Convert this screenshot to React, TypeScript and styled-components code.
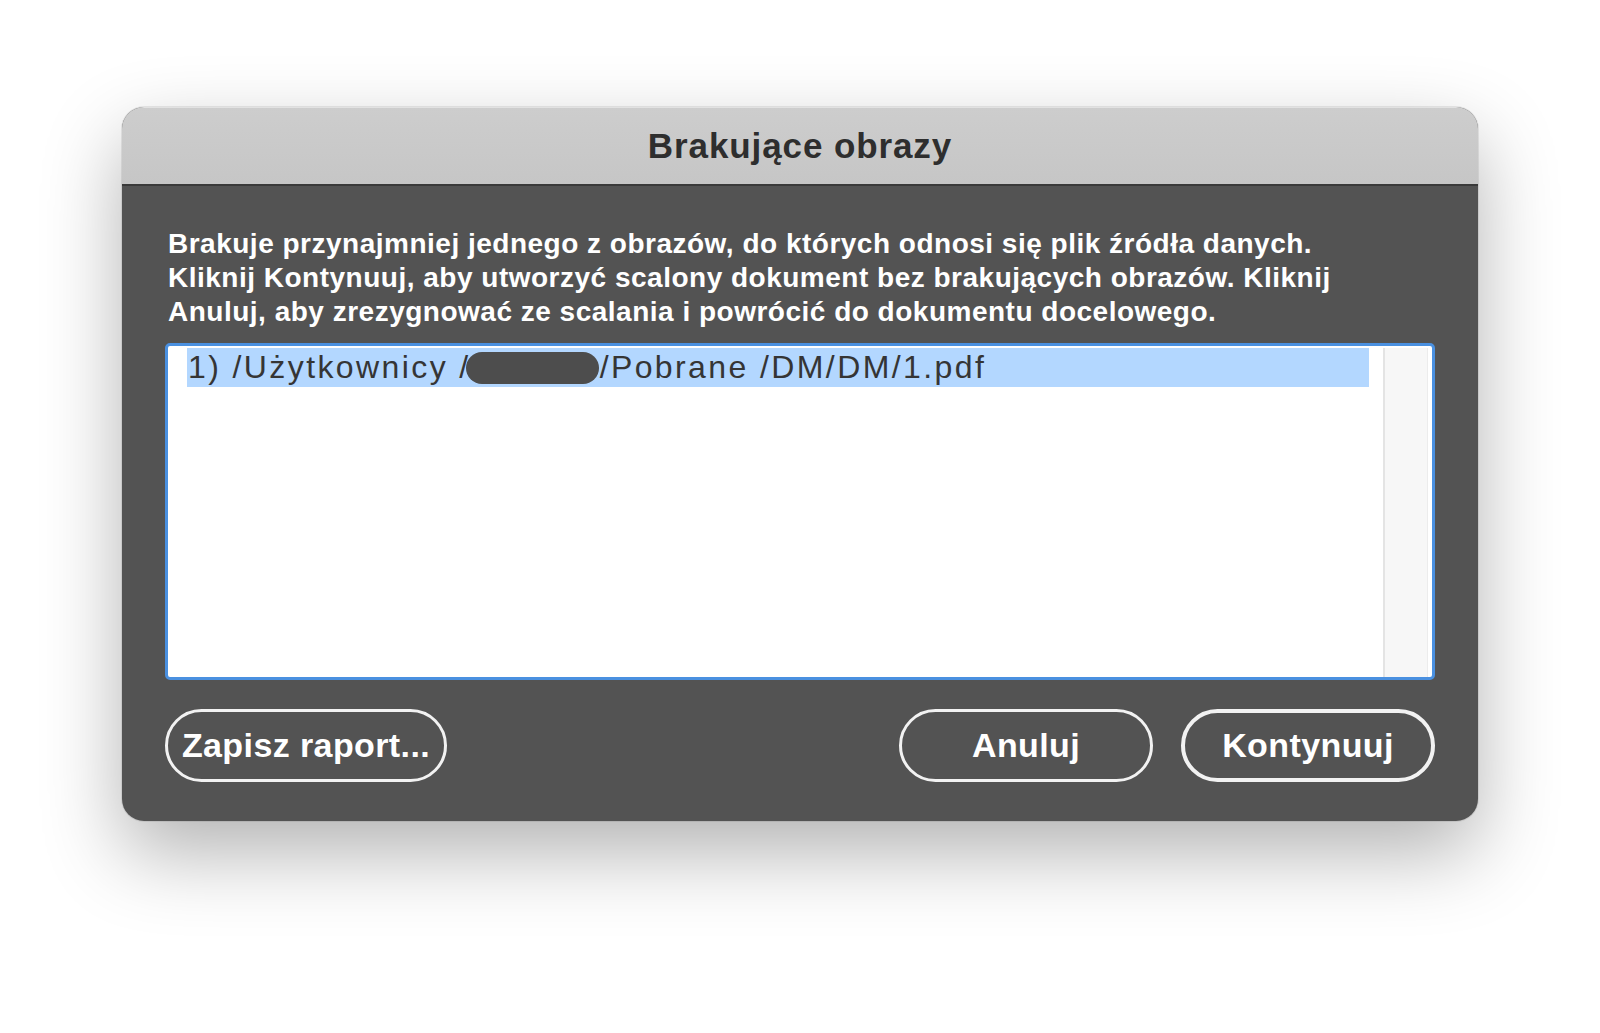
import styled, { createGlobalStyle } from "styled-components";

const Global = createGlobalStyle`
  html, body {
    margin: 0;
    padding: 0;
    background: #ffffff;
  }
  body {
    font-family: "Liberation Sans", Arial, sans-serif;
  }
`;

const Page = styled.div`
  width: 1600px;
  height: 1033px;
  padding: 107px 0 0 122px;
  box-sizing: border-box;
`;

const Dialog = styled.div`
  width: 1356px;
  height: 714px;
  border-radius: 22px;
  overflow: hidden;
  background: #535353;
  display: flex;
  flex-direction: column;
  box-shadow: 0 32px 80px rgba(0, 0, 0, 0.3), 0 0 0 1px rgba(0, 0, 0, 0.08);
`;

const TitleBar = styled.div`
  height: 76px;
  flex: 0 0 auto;
  background: linear-gradient(#cdcdcd, #c6c6c6);
  border-top: 1px solid #e2e2e2;
  border-bottom: 2px solid #3a3a3a;
  display: flex;
  align-items: center;
  justify-content: center;
  font-size: 35px;
  font-weight: 700;
  letter-spacing: 0.9px;
  color: #2e2e2e;
`;

const Body = styled.div`
  flex: 1;
  padding: 41px 43px 0 43px;
  display: flex;
  flex-direction: column;
`;

const Message = styled.p`
  margin: 0 0 0 3px;
  font-size: 28px;
  line-height: 34px;
  font-weight: 700;
  color: #ffffff;
  letter-spacing: 0.5px;
  white-space: nowrap;
`;

const ListBox = styled.div`
  margin-top: 14px;
  height: 337px;
  box-sizing: border-box;
  border: 3px solid #4a90e0;
  border-radius: 5px;
  background: #ffffff;
  display: flex;
  padding: 2px 4px 0 19px;
`;

const Rows = styled.div`
  flex: 1;
  padding-right: 14px;
`;

const Row = styled.div<{ $selected?: boolean }>`
  height: 39px;
  display: flex;
  align-items: center;
  background: ${(p) => (p.$selected ? "#b3d7ff" : "transparent")};
  font-size: 32px;
  color: #353535;
  padding-left: 1px;
  letter-spacing: 2.4px;
  white-space: pre;
`;

const Redacted = styled.span`
  display: inline-block;
  width: 133px;
  height: 32px;
  border-radius: 16px;
  background: #4d4d4d;
  margin: 0 1px 0 -5px;
`;

const Scroll = styled.div`
  width: 42px;
  background: #f7f7f7;
  border-left: 2px solid #e4e4e4;
  border-right: 1px solid #ececec;
`;

const Footer = styled.div`
  display: flex;
  align-items: center;
  margin-top: 29px;
  gap: 28px;
`;

const Spacer = styled.div`
  flex: 1;
`;

const Button = styled.button<{ $w: number; $default?: boolean }>`
  width: ${(p) => p.$w}px;
  height: 73px;
  box-sizing: border-box;
  border-radius: 37px;
  background: transparent;
  border: ${(p) => (p.$default ? "4px" : "3px")} solid #f2f2f2;
  color: #ffffff;
  font-family: "Liberation Sans", Arial, sans-serif;
  font-weight: 700;
  font-size: 34px;
  letter-spacing: 0.4px;
  padding: 0;
  display: flex;
  align-items: center;
  justify-content: center;
`;

export default function App() {
  return (
    <>
      <Global />
      <Page>
        <Dialog>
          <TitleBar>Brakujące obrazy</TitleBar>
          <Body>
            <Message>
              Brakuje przynajmniej jednego z obrazów, do których odnosi się plik źródła danych.
              <br />
              Kliknij Kontynuuj, aby utworzyć scalony dokument bez brakujących obrazów. Kliknij
              <br />
              Anuluj, aby zrezygnować ze scalania i powrócić do dokumentu docelowego.
            </Message>
            <ListBox>
              <Rows>
                <Row $selected>
                  {"1) /Użytkownicy /"}
                  <Redacted />
                  {"/Pobrane /DM/DM/1.pdf"}
                </Row>
              </Rows>
              <Scroll />
            </ListBox>
            <Footer>
              <Button $w={282}>Zapisz raport...</Button>
              <Spacer />
              <Button $w={254}>Anuluj</Button>
              <Button $w={254} $default>
                Kontynuuj
              </Button>
            </Footer>
          </Body>
        </Dialog>
      </Page>
    </>
  );
}
